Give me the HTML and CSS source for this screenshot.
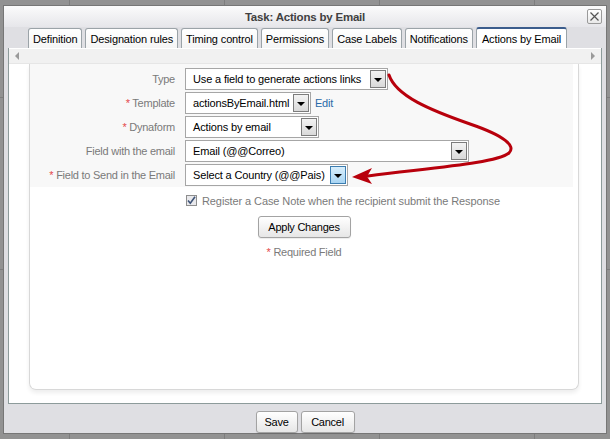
FILE: index.html
```html
<!DOCTYPE html>
<html>
<head>
<meta charset="utf-8">
<link rel="stylesheet" href="styles.css">
</head>
<body>
<div class="window">
  <div class="titlebar">
    <span class="title">Task: Actions by Email</span>
    <span class="close"><svg width="11" height="11" viewBox="0 0 11 11"><path d="M1.5 1.5 L9.5 9.5 M9.5 1.5 L1.5 9.5" stroke="#555" stroke-width="1.2" fill="none"/></svg></span>
  </div>
  <div class="tabs">
    <span class="tab">Definition</span>
    <span class="tab">Designation rules</span>
    <span class="tab">Timing control</span>
    <span class="tab">Permissions</span>
    <span class="tab">Case Labels</span>
    <span class="tab">Notifications</span>
    <span class="tab active">Actions by Email</span>
  </div>
  <div class="content">
    <div class="scrollstrip">
      <span class="arr arr-left"></span>
      <span class="arr arr-right"></span>
    </div>
    <div class="panel">
      <div class="form">
        <div class="row">
          <span class="label">Type</span>
          <div class="field">
            <div class="select w-type"><span class="val">Use a field to generate actions links</span><span class="btn"><i></i></span></div>
          </div>
        </div>
        <div class="row">
          <span class="label"><b class="star">*</b> Template</span>
          <div class="field">
            <div class="select w-template"><span class="val">actionsByEmail.html</span><span class="btn"><i></i></span></div>
            <a class="edit">Edit</a>
          </div>
        </div>
        <div class="row">
          <span class="label"><b class="star">*</b> Dynaform</span>
          <div class="field">
            <div class="select w-dyna"><span class="val">Actions by email</span><span class="btn"><i></i></span></div>
          </div>
        </div>
        <div class="row">
          <span class="label">Field with the email</span>
          <div class="field">
            <div class="select w-email"><span class="val">Email (@@Correo)</span><span class="btn"><i></i></span></div>
          </div>
        </div>
        <div class="row">
          <span class="label"><b class="star">*</b> Field to Send in the Email</span>
          <div class="field">
            <div class="select w-send"><span class="val">Select a Country (@@Pais)</span><span class="btn hot"><i></i></span></div>
          </div>
        </div>
      </div>
      <div class="checkrow">
        <span class="cbox"><svg width="11" height="11" viewBox="0 0 11 11"><path d="M2 5.5 L4.3 8.2 L9 1.8" stroke="#3f5478" stroke-width="1.6" fill="none"/></svg></span>
        <span class="ctext">Register a Case Note when the recipient submit the Response</span>
      </div>
      <div class="applyrow"><span class="button apply">Apply Changes</span></div>
      <div class="required"><b class="star">*</b> Required Field</div>
    </div>
  </div>
  <div class="footer">
    <span class="button fbtn save">Save</span>
    <span class="button fbtn cancel">Cancel</span>
  </div>
</div>
<svg class="arrow" width="610" height="439" viewBox="0 0 610 439">
  <path d="M389 75 C 396 96, 430 110, 470 124 C 505 136, 516 146, 509 153 C 496 163, 440 167, 368 176" stroke="#b8000c" stroke-width="3" fill="none" stroke-linecap="round"/>
  <polygon points="352,177 372,168 367,176.5 372,184" fill="#b8000c"/>
</svg>
</body>
</html>
```
FILE: styles.css
```css
* { box-sizing: border-box; }
html, body { margin: 0; padding: 0; }
body {
  width: 610px;
  height: 439px;
  overflow: hidden;
  position: relative;
  font-family: "Liberation Sans", Arial, sans-serif;
  font-size: 11px;
  letter-spacing: -0.25px;
  background-color: #929292;
  background-image:
    linear-gradient(90deg, transparent 69px, #7d7d7d 69px, #7d7d7d 70px, transparent 70px),
    linear-gradient(180deg, transparent 97px, #7d7d7d 97px, #7d7d7d 98px, transparent 98px);
  background-size: 155px 100%, 100% 172px;
}
.window {
  margin: 5px 0 0 3px;
  width: 604px;
  height: 429px;
  border: 1px solid #767676;
  background: #dfdfe3;
  display: flex;
  flex-direction: column;
}
.titlebar {
  height: 21px;
  flex: none;
  position: relative;
  display: flex;
  align-items: center;
  justify-content: center;
  background: linear-gradient(#fbfbfb, #e6e6ea);
}
.title {
  font-weight: bold;
  color: #404040;
  font-size: 11.5px;
  letter-spacing: -0.2px;
}
.close {
  position: absolute;
  right: 4px;
  top: 3px;
  width: 15px;
  height: 15px;
  border: 1px solid #9a9a9a;
  border-radius: 2px;
  background: linear-gradient(#ffffff, #e9e9e9);
  display: flex;
  align-items: center;
  justify-content: center;
}
.tabs {
  height: 21px;
  flex: none;
  display: flex;
  align-items: flex-end;
  gap: 3px;
  padding-left: 24px;
  background: #dfdfe3;
}
.tab {
  height: 20px;
  padding: 0 4px;
  border: 1px solid #9ba3a8;
  border-bottom: none;
  border-radius: 3px 3px 0 0;
  background: linear-gradient(#ffffff, #f5f5f5);
  color: #000;
  display: flex;
  align-items: center;
  white-space: nowrap;
  letter-spacing: -0.14px;
}
.tab.active {
  height: 21px;
  border-top: 2px solid #3b5c8c;
  background: #fff;
  padding: 0 5px;
}
.content {
  flex: none;
  height: 356px;
  margin: 0 4px;
  background: #fff;
  border: 1px solid #8d9b9b;
  border-top: none;
  display: flex;
  flex-direction: column;
}
.scrollstrip {
  margin-top: 1px;
  height: 15px;
  flex: none;
  background: #f1f1f1;
  border-bottom: 1px solid #e6e6e6;
  display: flex;
  align-items: center;
  justify-content: space-between;
  padding: 0 6px;
}
.arr {
  width: 0;
  height: 0;
  border-top: 4px solid transparent;
  border-bottom: 4px solid transparent;
}
.arr-left { border-right: 4px solid #9a9a9a; }
.arr-right { border-left: 4px solid #9a9a9a; }
.panel {
  margin: 0 22px 0 20px;
  height: 326px;
  border: 1px solid #d8d8d8;
  border-top: none;
  border-radius: 0 0 7px 7px;
  box-shadow: 0 3px 4px rgba(0,0,0,0.07);
  display: flex;
  flex-direction: column;
}
.form {
  margin-right: 5px;
  background: #f8f8f8;
  padding: 4px 0 1px 0;
  display: flex;
  flex-direction: column;
  gap: 2px;
}
.row {
  display: flex;
  align-items: center;
  height: 22px;
}
.label {
  width: 145px;
  flex: none;
  text-align: right;
  color: #7a7a7a;
}
.star {
  color: #e4484a;
  font-weight: normal;
}
.field {
  margin-left: 10px;
  display: flex;
  align-items: center;
}
.select {
  height: 22px;
  border: 1px solid #a6a6a6;
  background: #fff;
  padding: 1px;
  display: flex;
  align-items: center;
}
.val {
  flex: 1;
  padding-left: 6px;
  color: #000;
  white-space: nowrap;
  font-size: 11px;
  letter-spacing: -0.15px;
}
.btn {
  width: 16px;
  height: 18px;
  flex: none;
  border: 1px solid #7c7c7c;
  background: linear-gradient(#f3f3f3, #d9d9d9);
  display: flex;
  align-items: flex-end;
  justify-content: center;
  padding-bottom: 5px;
}
.btn i {
  display: block;
  width: 0;
  height: 0;
  border-left: 4px solid transparent;
  border-right: 4px solid transparent;
  border-top: 4px solid #000;
}
.btn.hot {
  border-color: #3c7db0;
  background: linear-gradient(#d8eefb, #a9d5f3);
}
.w-type { width: 203px; }
.w-template { width: 126px; }
.w-dyna { width: 134px; }
.w-email { width: 284px; }
.w-send { width: 163px; }
.edit {
  margin-left: 4px;
  color: #2a6aa8;
}
.checkrow {
  margin-top: 7px;
  margin-left: 156px;
  display: flex;
  align-items: center;
  gap: 5px;
  height: 13px;
}
.cbox {
  width: 11px;
  height: 11px;
  border: 1px solid #8e8e8e;
  background: #e9e9ec;
  display: flex;
}
.cbox svg { margin: -1px; }
.ctext { color: #7a7a7a; letter-spacing: -0.1px; }
.applyrow {
  margin-top: 9px;
  display: flex;
  justify-content: center;
}
.button {
  border: 1px solid #a3a3a3;
  border-radius: 3px;
  background: linear-gradient(#ffffff, #e6e6e6);
  color: #000;
  display: flex;
  align-items: center;
  justify-content: center;
  box-shadow: 0 1px 1px rgba(0,0,0,0.08);
}
.apply {
  width: 93px;
  height: 22px;
}
.required {
  margin-top: 8px;
  text-align: center;
  color: #7a7a7a;
}
.footer {
  flex: 1;
  display: flex;
  justify-content: center;
  align-items: flex-start;
  padding-top: 7px;
  gap: 3px;
}
.fbtn { height: 22px; }
.save { width: 42px; }
.cancel { width: 54px; }
.arrow {
  position: absolute;
  left: 0;
  top: 0;
  pointer-events: none;
}
```
